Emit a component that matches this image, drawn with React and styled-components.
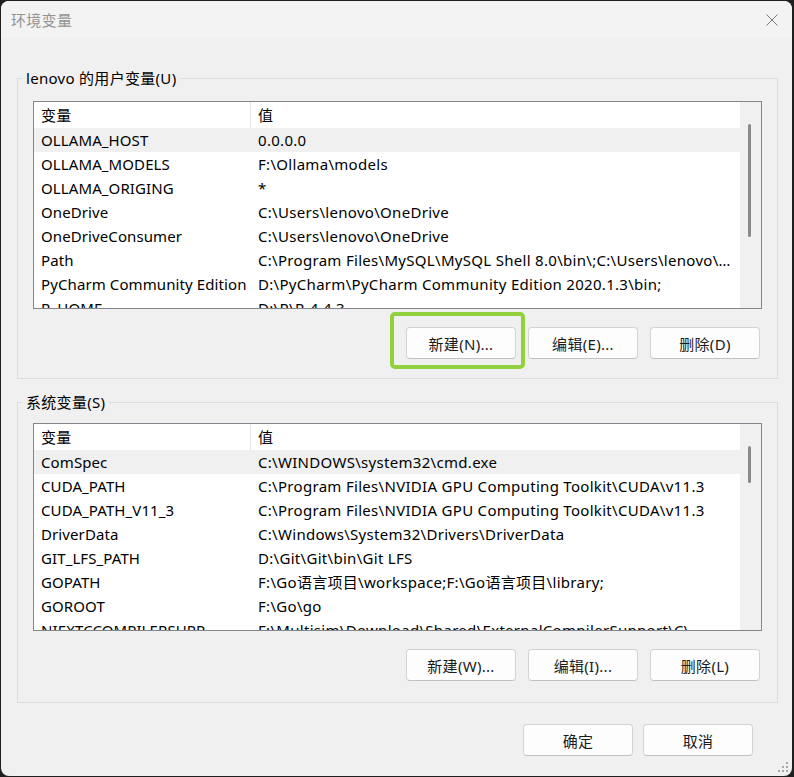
import React from 'react';
import styled, { createGlobalStyle } from 'styled-components';

const GlobalStyle = createGlobalStyle`
  body {
    margin: 0;
    background: #1f1f1f;
    font-family: "Noto Sans", "Noto Sans CJK SC", sans-serif;
    letter-spacing: 0.3px;
  }
`;

const userVars = [
  ['OLLAMA_HOST', '0.0.0.0'],
  ['OLLAMA_MODELS', 'F:\\Ollama\\models'],
  ['OLLAMA_ORIGING', '*'],
  ['OneDrive', 'C:\\Users\\lenovo\\OneDrive'],
  ['OneDriveConsumer', 'C:\\Users\\lenovo\\OneDrive'],
  ['Path', 'C:\\Program Files\\MySQL\\MySQL Shell 8.0\\bin\\;C:\\Users\\lenovo\\AppData\\Local\\Microsoft\\WindowsApps;'],
  ['PyCharm Community Edition', 'D:\\PyCharm\\PyCharm Community Edition 2020.1.3\\bin;'],
  ['R_HOME', 'D:\\R\\R-4.4.3'],
];

const systemVars = [
  ['ComSpec', 'C:\\WINDOWS\\system32\\cmd.exe'],
  ['CUDA_PATH', 'C:\\Program Files\\NVIDIA GPU Computing Toolkit\\CUDA\\v11.3'],
  ['CUDA_PATH_V11_3', 'C:\\Program Files\\NVIDIA GPU Computing Toolkit\\CUDA\\v11.3'],
  ['DriverData', 'C:\\Windows\\System32\\Drivers\\DriverData'],
  ['GIT_LFS_PATH', 'D:\\Git\\Git\\bin\\Git LFS'],
  ['GOPATH', 'F:\\Go语言项目\\workspace;F:\\Go语言项目\\library;'],
  ['GOROOT', 'F:\\Go\\go'],
  ['NIEXTCCOMPILERSUPP', 'F:\\Multisim\\Download\\Shared\\ExternalCompilerSupport\\C\\'],
];

function VarList({ rows, thumb }) {
  return (
    <List>
      <ListBody>
        <Header>
          <HeaderCell $sep>变量</HeaderCell>
          <HeaderCell>值</HeaderCell>
        </Header>
        {rows.map(([name, value], i) => (
          <Row key={name} $selected={i === 0}>
            <NameCell>{name}</NameCell>
            <ValueCell>{value}</ValueCell>
          </Row>
        ))}
      </ListBody>
      <ScrollTrack>
        <Thumb $height={thumb} />
      </ScrollTrack>
    </List>
  );
}

function App() {
  return (
    <>
      <GlobalStyle />
      <Window>
        <TitleBar>
          <Title>环境变量</Title>
          <svg width="12" height="12" viewBox="0 0 12 12">
            <path d="M0.5 0.5 L11.5 11.5 M11.5 0.5 L0.5 11.5" stroke="#7a7a7a" strokeWidth="1" fill="none" />
          </svg>
        </TitleBar>
        <Content>
          <Group $mt={30} $pt={13} $pb={19}>
            <Legend>lenovo 的用户变量(U)</Legend>
            <VarList rows={userVars} thumb={113} />
            <ButtonRow>
              <Highlight>
                <Button>新建(N)...</Button>
              </Highlight>
              <Button>编辑(E)...</Button>
              <Button>删除(D)</Button>
            </ButtonRow>
          </Group>
          <Group $mt={13} $pt={11} $pb={21}>
            <Legend>系统变量(S)</Legend>
            <VarList rows={systemVars} thumb={37} />
            <ButtonRow>
              <Button>新建(W)...</Button>
              <Button>编辑(I)...</Button>
              <Button>删除(L)</Button>
            </ButtonRow>
          </Group>
          <Footer>
            <Button>确定</Button>
            <Button>取消</Button>
          </Footer>
        </Content>
        <Grip width="12" height="12" viewBox="0 0 12 12">
          {[[10, 2], [10, 6], [6, 6], [10, 10], [6, 10], [2, 10]].map(([x, y]) => (
            <rect key={`${x}-${y}`} x={x - 1} y={y - 1} width="2" height="2" fill="#a8a8a8" />
          ))}
        </Grip>
      </Window>
    </>
  );
}

const Window = styled.div`
  position: relative;
  margin: 1px 0 0 1px;
  width: 791px;
  height: 775px;
  background: #f0f0f0;
  border-radius: 8px;
  overflow: hidden;
  display: flex;
  flex-direction: column;
`;

const TitleBar = styled.div`
  height: 37px;
  flex-shrink: 0;
  background: #f3f3f3;
  display: flex;
  align-items: center;
  justify-content: space-between;
  padding: 0 14px 0 10px;
`;

const Title = styled.span`
  font-size: 15px;
  color: #939393;
`;

const Content = styled.div`
  display: flex;
  flex-direction: column;
  padding: 0 14px 0 16px;
`;

const Group = styled.fieldset`
  margin: ${p => p.$mt}px 0 0;
  padding: ${p => p.$pt}px 15px ${p => p.$pb}px;
  border: 1px solid #dcdcdc;
  min-width: 0;
`;

const Legend = styled.legend`
  margin-left: -11px;
  padding: 0 4px;
  font-size: 15px;
  line-height: 20px;
  color: #000;
`;

const List = styled.div`
  height: 208px;
  box-sizing: border-box;
  border: 1px solid #83878d;
  background: #fff;
  display: flex;
  overflow: hidden;
`;

const ListBody = styled.div`
  flex: 1;
  min-width: 0;
  overflow: hidden;
`;

const Header = styled.div`
  display: grid;
  grid-template-columns: 217px 1fr;
  height: 26px;
  align-items: stretch;
`;

const HeaderCell = styled.div`
  padding: 0 7px;
  font-size: 15px;
  line-height: 26px;
  color: #000;
  border-right: ${p => (p.$sep ? '1px solid #e5e5e5' : 'none')};
`;

const Row = styled.div`
  display: grid;
  grid-template-columns: 217px 1fr;
  height: 24px;
  background: ${p => (p.$selected ? '#f0f0f0' : 'transparent')};
`;

const NameCell = styled.div`
  padding: 0 0 0 7px;
  font-size: 15px;
  line-height: 24px;
  letter-spacing: 0.1px;
  color: #000;
  white-space: nowrap;
  overflow: visible;
`;

const ValueCell = styled.div`
  padding: 0 7px;
  font-size: 15px;
  line-height: 24px;
  color: #000;
  white-space: nowrap;
  overflow: hidden;
  text-overflow: ellipsis;
`;

const ScrollTrack = styled.div`
  width: 21px;
  flex-shrink: 0;
  background: #f0f0f0;
  padding: 22px 0 0 8px;
  box-sizing: border-box;
`;

const Thumb = styled.div`
  width: 3px;
  height: ${p => p.$height}px;
  border-radius: 2px;
  background: #8a8a8a;
`;

const ButtonRow = styled.div`
  display: flex;
  justify-content: flex-end;
  gap: 12px;
  margin-top: 18px;
  padding-right: 2px;
`;

const Footer = styled.div`
  display: flex;
  justify-content: flex-end;
  gap: 10px;
  margin-top: 21px;
  padding-right: 25px;
`;

const Button = styled.button`
  width: 110px;
  height: 32px;
  padding: 0;
  box-sizing: border-box;
  border: 1px solid #d3d3d3;
  border-bottom-color: #c2c2c2;
  border-radius: 4px;
  background: #fdfdfd;
  font-family: inherit;
  font-size: 15px;
  letter-spacing: inherit;
  color: #1b1b1b;
`;

const Highlight = styled.span`
  position: relative;
  display: flex;

  &::after {
    content: '';
    position: absolute;
    inset: -15px -9px -10px -16px;
    border: 4px solid #92d13e;
    border-radius: 5px;
    pointer-events: none;
  }
`;

const Grip = styled.svg`
  position: absolute;
  right: 3px;
  bottom: 3px;
`;

export default App;
